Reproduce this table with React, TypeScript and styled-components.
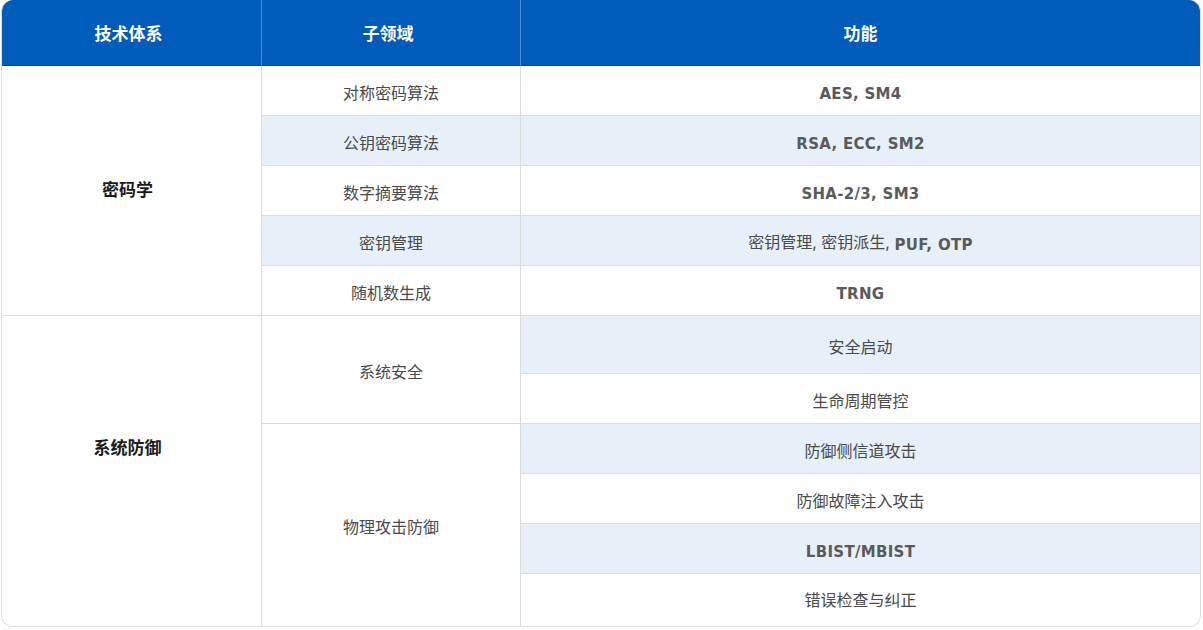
import styled, { createGlobalStyle } from "styled-components";

const GlobalStyle = createGlobalStyle`
  body {
    margin: 0;
    background: #ffffff;
    font-family: "Inter", "Noto Sans", "Noto Sans CJK SC", sans-serif;
  }
`;

const Page = styled.div`
  padding: 0 1px;
`;

const Table = styled.div`
  display: grid;
  grid-template-columns: 260px 259px 1fr;
  grid-template-rows: 66px repeat(5, 50px) 58px repeat(4, 50px) 52px;
  width: 1200px;
  box-sizing: border-box;
  border: 1px solid #dcdcdc;
  border-top: none;
  border-radius: 12px;
  overflow: hidden;
`;

const HeadCell = styled.div<{ $last?: boolean }>`
  display: flex;
  align-items: center;
  justify-content: center;
  padding-right: ${(p) => (p.$last ? "0" : "6px")};
  background: #005bbb;
  color: #ffffff;
  font-size: 17px;
  font-weight: 700;
  border-right: ${(p) => (p.$last ? "none" : "1px solid #4d8bd0")};
  border-bottom: 1px solid #0a4ea0;
`;

const Cell = styled.div<{
  $span?: number;
  $shade?: boolean;
  $strong?: boolean;
  $last?: boolean;
  $bottom?: boolean;
  $lift?: number;
  $col: number;
}>`
  grid-column: ${(p) => p.$col};
  grid-row: span ${(p) => p.$span ?? 1};
  display: flex;
  align-items: center;
  justify-content: center;
  padding-top: 2px;
  padding-right: ${(p) => (p.$strong ? "8px" : "0")};
  padding-bottom: ${(p) => p.$lift ?? 0}px;
  background: ${(p) => (p.$shade ? "#e7eff9" : "#ffffff")};
  color: ${(p) => (p.$strong ? "#1a1a1a" : "#4a4a4a")};
  font-size: ${(p) => (p.$strong ? "17px" : "16px")};
  font-weight: ${(p) => (p.$strong ? 600 : 400)};
  border-right: ${(p) => (p.$last ? "none" : "1px solid #dcdcdc")};
  border-bottom: ${(p) => (p.$bottom ? "none" : "1px solid #dcdcdc")};
  box-sizing: border-box;
`;

const Latin = styled.span`
  font-family: "DejaVu Sans", "Noto Sans", sans-serif;
  font-size: 15px;
  font-weight: 700;
  letter-spacing: 0.3px;
  color: #5a5a5a;
  vertical-align: -2px;
`;

type Item = { text: string; shade: boolean };

const fmt = (s: string) => {
  // latin runs in a heavier, wider face than the CJK text
  const parts = s.split(/([A-Za-z0-9\-\/]+(?:[ ,]+[A-Za-z0-9\-\/]+)*)/);
  return (
    <span>
      {parts.map((p, i) =>
        /[A-Za-z0-9]/.test(p) ? <Latin key={i}>{p}</Latin> : p
      )}
    </span>
  );
};

const crypto: { sub: string; fn: string; shade: boolean }[] = [
  { sub: "对称密码算法", fn: "AES, SM4", shade: false },
  { sub: "公钥密码算法", fn: "RSA, ECC, SM2", shade: true },
  { sub: "数字摘要算法", fn: "SHA-2/3, SM3", shade: false },
  { sub: "密钥管理", fn: "密钥管理, 密钥派生, PUF, OTP", shade: true },
  { sub: "随机数生成", fn: "TRNG", shade: false },
];

const sysSafety: Item[] = [
  { text: "安全启动", shade: true },
  { text: "生命周期管控", shade: false },
];

const physical: Item[] = [
  { text: "防御侧信道攻击", shade: true },
  { text: "防御故障注入攻击", shade: false },
  { text: "LBIST/MBIST", shade: true },
  { text: "错误检查与纠正", shade: false },
];

export default function App() {
  return (
    <Page>
      <GlobalStyle />
      <Table>
        <HeadCell>技术体系</HeadCell>
        <HeadCell>子领域</HeadCell>
        <HeadCell $last>功能</HeadCell>

        <Cell $col={1} $span={5} $strong $lift={6}>
          密码学
        </Cell>
        {crypto.map((r) => [
          <Cell key={r.sub} $col={2} $shade={r.shade}>
            {r.sub}
          </Cell>,
          <Cell key={r.fn} $col={3} $shade={r.shade} $last>
            {fmt(r.fn)}
          </Cell>,
        ])}

        <Cell $col={1} $span={6} $strong $bottom $lift={52}>
          系统防御
        </Cell>
        <Cell $col={2} $span={2}>
          系统安全
        </Cell>
        {sysSafety.map((r) => (
          <Cell key={r.text} $col={3} $shade={r.shade} $last>
            {fmt(r.text)}
          </Cell>
        ))}
        <Cell $col={2} $span={4} $bottom>
          物理攻击防御
        </Cell>
        {physical.map((r, i) => (
          <Cell
            key={r.text}
            $col={3}
            $shade={r.shade}
            $last
            $bottom={i === physical.length - 1}
            $lift={i === physical.length - 1 ? 4 : 0}
          >
            {fmt(r.text)}
          </Cell>
        ))}
      </Table>
    </Page>
  );
}
